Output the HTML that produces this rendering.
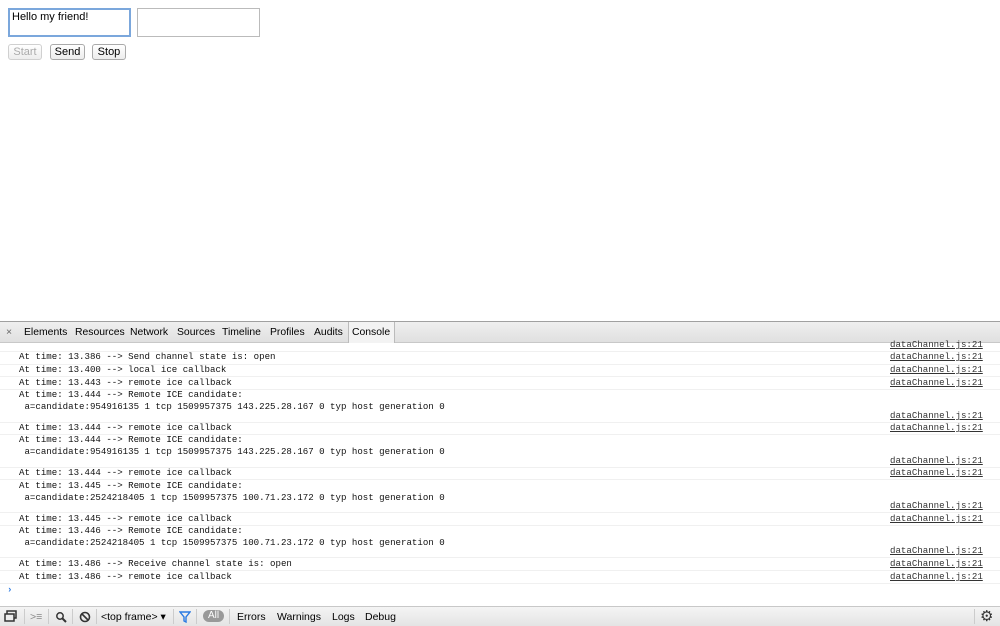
<!DOCTYPE html>
<html><head><meta charset="utf-8"><style>
body{margin:0;width:1000px;height:625px;position:relative;overflow:hidden;background:#fff;font-family:"Liberation Sans",sans-serif}
.ta{position:absolute;top:8px;width:123px;height:29px;border:1px solid #bbb;box-sizing:border-box;font-size:11px;padding:2px 3px;color:#000}
.btn{position:absolute;top:44px;height:14px;border:1px solid #aaa;border-radius:3px;font-size:11px;line-height:15px;text-align:center;background:linear-gradient(#fff,#ededed);box-sizing:content-box}
.tb{position:absolute;left:0;top:321px;width:1000px;height:22px;border-top:1px solid #a0a0a0;background:linear-gradient(#efefef,#e0e0e0);border-bottom:1px solid #c8c8c8;box-sizing:border-box;font-size:10.4px}
.tb span{position:absolute;top:5px}
.l{position:absolute;font-family:"Liberation Mono",monospace;font-size:9.1px;line-height:12px;color:#111;white-space:pre}
.k{position:absolute;left:890px;font-family:"Liberation Mono",monospace;font-size:9.1px;line-height:12px;color:#333;text-decoration:underline}
.s{position:absolute;left:0;width:1000px;height:1px;background:#f0f0f0}
.bb{position:absolute;left:0;top:606px;width:1000px;height:19px;border-top:1px solid #c8c8c8;background:linear-gradient(#f4f4f4,#e4e4e4);font-size:10.5px}
.bb span{position:absolute;top:4px}
.vs{position:absolute;top:2px;width:1px;height:15px;background:#ccc}
</style></head><body>
<div class="ta" style="left:8px;border:2px solid #7ba7dc;padding:1px 2px">Hello my friend!</div>
<div class="ta" style="left:137px"></div>
<div class="btn" style="left:8px;width:32px;color:#aaa;border-color:#d0d0d0">Start</div>
<div class="btn" style="left:50px;width:33px">Send</div>
<div class="btn" style="left:92px;width:32px">Stop</div>

<div class="tb">
<span style="left:6px;color:#666">×</span>
<span style="left:24px">Elements</span>
<span style="left:75px">Resources</span>
<span style="left:130px">Network</span>
<span style="left:177px">Sources</span>
<span style="left:222px">Timeline</span>
<span style="left:270px">Profiles</span>
<span style="left:314px">Audits</span>
<div style="position:absolute;left:348px;top:0;width:45px;height:21px;background:#f3f3f3;border-left:1px solid #bbb;border-right:1px solid #bbb"></div>
<span style="left:352px">Console</span>
</div>

<div class="k" style="top:339px">dataChannel.js:21</div>
<div class="s" style="top:351px"></div>
<div class="l" style="left:19px;top:351px">At time: 13.386 --&gt; Send channel state is: open</div><div class="k" style="top:351px">dataChannel.js:21</div>
<div class="s" style="top:364px"></div>
<div class="l" style="left:19px;top:364px">At time: 13.400 --&gt; local ice callback</div><div class="k" style="top:364px">dataChannel.js:21</div>
<div class="s" style="top:376px"></div>
<div class="l" style="left:19px;top:377px">At time: 13.443 --&gt; remote ice callback</div><div class="k" style="top:377px">dataChannel.js:21</div>
<div class="s" style="top:389px"></div>
<div class="l" style="left:19px;top:389px">At time: 13.444 --&gt; Remote ICE candidate:
 a=candidate:954916135 1 tcp 1509957375 143.225.28.167 0 typ host generation 0</div><div class="k" style="top:410px">dataChannel.js:21</div>
<div class="s" style="top:422px"></div>
<div class="l" style="left:19px;top:422px">At time: 13.444 --&gt; remote ice callback</div><div class="k" style="top:422px">dataChannel.js:21</div>
<div class="s" style="top:434px"></div>
<div class="l" style="left:19px;top:434px">At time: 13.444 --&gt; Remote ICE candidate:
 a=candidate:954916135 1 tcp 1509957375 143.225.28.167 0 typ host generation 0</div><div class="k" style="top:455px">dataChannel.js:21</div>
<div class="s" style="top:467px"></div>
<div class="l" style="left:19px;top:467px">At time: 13.444 --&gt; remote ice callback</div><div class="k" style="top:467px">dataChannel.js:21</div>
<div class="s" style="top:479px"></div>
<div class="l" style="left:19px;top:480px">At time: 13.445 --&gt; Remote ICE candidate:
 a=candidate:2524218405 1 tcp 1509957375 100.71.23.172 0 typ host generation 0</div><div class="k" style="top:500px">dataChannel.js:21</div>
<div class="s" style="top:512px"></div>
<div class="l" style="left:19px;top:513px">At time: 13.445 --&gt; remote ice callback</div><div class="k" style="top:513px">dataChannel.js:21</div>
<div class="s" style="top:525px"></div>
<div class="l" style="left:19px;top:525px">At time: 13.446 --&gt; Remote ICE candidate:
 a=candidate:2524218405 1 tcp 1509957375 100.71.23.172 0 typ host generation 0</div><div class="k" style="top:545px">dataChannel.js:21</div>
<div class="s" style="top:557px"></div>
<div class="l" style="left:19px;top:558px">At time: 13.486 --&gt; Receive channel state is: open</div><div class="k" style="top:558px">dataChannel.js:21</div>
<div class="s" style="top:570px"></div>
<div class="l" style="left:19px;top:571px">At time: 13.486 --&gt; remote ice callback</div><div class="k" style="top:571px">dataChannel.js:21</div>
<div class="s" style="top:583px"></div>
<div class="l" style="left:7px;top:584px;color:#2a7ae2;font-weight:bold">›</div>

<div class="bb">
<svg style="position:absolute;left:4px;top:3px" width="14" height="13"><rect x="3" y="1" width="9" height="7" fill="none" stroke="#333" stroke-width="1.5"/><rect x="1" y="4" width="9" height="7" fill="#eee" stroke="#333" stroke-width="1.5"/></svg>
<div class="vs" style="left:24px"></div>
<span style="left:30px;color:#888">&gt;≡</span>
<div class="vs" style="left:48px"></div>
<svg style="position:absolute;left:55px;top:4px" width="12" height="12"><circle cx="5" cy="5" r="3.2" fill="none" stroke="#333" stroke-width="1.5"/><line x1="7.5" y1="7.5" x2="11" y2="11" stroke="#333" stroke-width="2"/></svg>
<div class="vs" style="left:72px"></div>
<svg style="position:absolute;left:79px;top:4px" width="12" height="12"><circle cx="6" cy="6" r="4.5" fill="none" stroke="#333" stroke-width="1.6"/><line x1="3" y1="3" x2="9" y2="9" stroke="#333" stroke-width="1.6"/></svg>
<div class="vs" style="left:96px"></div>
<span style="left:101px">&lt;top frame&gt; ▾</span>
<div class="vs" style="left:173px"></div>
<svg style="position:absolute;left:179px;top:4px" width="12" height="12"><path d="M1 1H11L7 6V11L5 10V6Z" fill="none" stroke="#2a7ae2" stroke-width="1.4"/></svg>
<div class="vs" style="left:196px"></div>
<div style="position:absolute;left:203px;top:3px;width:21px;height:12px;border-radius:7px;background:#999;color:#fff;font-size:10px;line-height:12px;text-align:center">All</div>
<div class="vs" style="left:229px"></div>
<span style="left:237px">Errors</span>
<span style="left:277px">Warnings</span>
<span style="left:332px">Logs</span>
<span style="left:365px">Debug</span>
<div class="vs" style="left:974px"></div>
<span style="left:980px;top:0;font-size:15px;color:#333">⚙</span>
</div>
</body></html>
